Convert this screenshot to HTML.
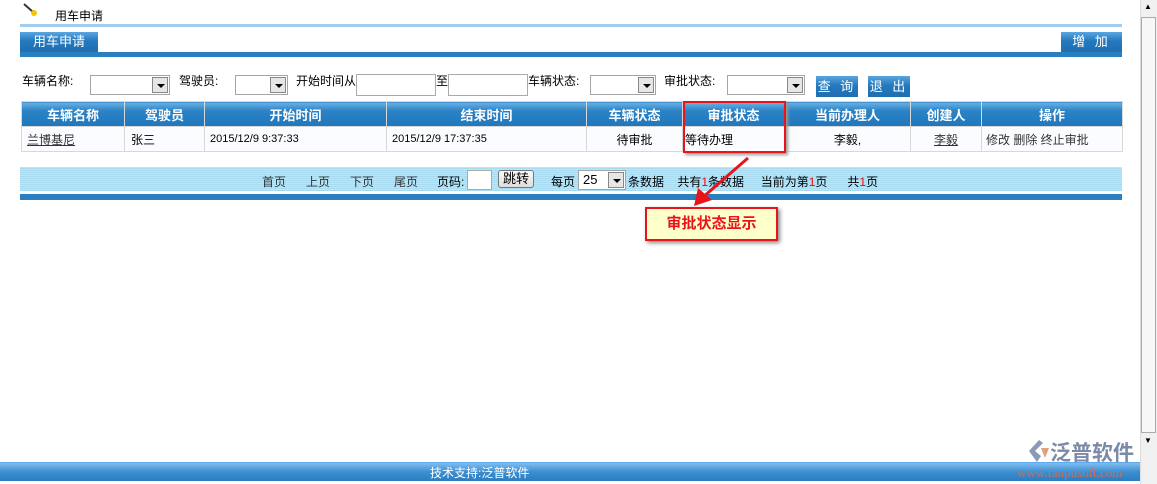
<!DOCTYPE html>
<html><head><meta charset="utf-8"><style>
*{margin:0;padding:0;box-sizing:border-box}
body{width:1157px;height:484px;overflow:hidden;background:#fff;font-family:"Liberation Sans","Noto Sans CJK SC",sans-serif;font-size:12px;color:#000;position:relative}
.a{position:absolute}
.btn{background:linear-gradient(#5aa6df,#2479bd 45%,#1f6fb1);color:#fff;text-align:center;font-size:13px;letter-spacing:3px}
.sel{position:absolute;height:20px;border:1px solid #a5a5a5;background:#fff}
.sel i{position:absolute;right:1px;top:1px;width:16px;height:16px;background:#e6e6e6;border:1px solid #888}
.sel i:after{content:"";position:absolute;left:4px;top:6px;border:4px solid transparent;border-top:4px solid #000}
.inp{position:absolute;height:22px;border:1px solid #aaa;background:#fff}
table{position:absolute;left:21px;top:101px;width:1102px;border-collapse:collapse}
td,th{border:1px solid #d8d8d8;height:25px}
th{background:linear-gradient(#6ab2e6,#2b82c4 35%,#1f77bd);color:#fff;font-size:13px;font-weight:bold}
td{background:#fafcff;font-size:12px}
</style></head><body>
<svg class="a" style="left:22px;top:2px" width="16" height="14"><line x1="2" y1="2" x2="11" y2="10" stroke="#333" stroke-width="2"/><circle cx="12" cy="11" r="3" fill="#f5c400"/></svg>
<div class="a" style="left:55px;top:7px;font-size:12px">用车申请</div>
<div class="a" style="left:20px;top:24px;width:1102px;height:3px;background:#a1cdf1"></div>
<div class="a btn" style="left:20px;top:32px;width:78px;height:20px;line-height:20px;letter-spacing:0">用车申请</div>
<div class="a btn" style="left:1061px;top:32px;width:61px;height:20px;line-height:20px">增 加</div>
<div class="a" style="left:20px;top:52px;width:1102px;height:5px;background:#2a7fc0"></div>

<div class="a" style="left:22px;top:72px">车辆名称:</div>
<div class="sel" style="left:90px;top:75px;width:80px"><i></i></div>
<div class="a" style="left:179px;top:72px">驾驶员:</div>
<div class="sel" style="left:235px;top:75px;width:53px"><i></i></div>
<div class="a" style="left:296px;top:72px">开始时间从</div>
<div class="inp" style="left:356px;top:74px;width:80px"></div>
<div class="a" style="left:436px;top:72px">至</div>
<div class="inp" style="left:448px;top:74px;width:80px"></div>
<div class="a" style="left:528px;top:72px">车辆状态:</div>
<div class="sel" style="left:590px;top:75px;width:66px"><i></i></div>
<div class="a" style="left:664px;top:72px">审批状态:</div>
<div class="sel" style="left:727px;top:75px;width:78px"><i></i></div>
<div class="a btn" style="left:816px;top:76px;width:42px;height:21px;line-height:21px">查 询</div>
<div class="a btn" style="left:868px;top:76px;width:42px;height:21px;line-height:21px">退 出</div>

<table><tr><th style="width:103px">车辆名称</th><th style="width:80px">驾驶员</th><th style="width:182px">开始时间</th><th style="width:200px">结束时间</th><th style="width:96px">车辆状态</th><th style="width:102px">审批状态</th><th style="width:126px">当前办理人</th><th style="width:71px">创建人</th><th>操作</th></tr>
<tr><td style="padding-left:5px"><u style="color:#333">兰博基尼</u></td><td style="padding-left:6px">张三</td><td style="padding-left:5px;font-size:11px">2015/12/9 9:37:33</td><td style="padding-left:5px;font-size:11px">2015/12/9 17:37:35</td><td style="text-align:center">待审批</td><td style="padding-left:2px">等待办理</td><td style="text-align:center">李毅,</td><td style="text-align:center"><u style="color:#333">李毅</u></td><td style="padding-left:4px;color:#333">修改 删除 终止审批</td></tr></table>
<div class="a" style="left:683px;top:101px;width:103px;height:52px;border:2px solid #e8141a;box-shadow:2px 2px 3px #999"></div>

<div class="a" style="left:20px;top:167px;width:1102px;height:24px;background:repeating-linear-gradient(#bfe5f3 0 1px,#a8daf0 1px 2px)"></div>
<div class="a" style="left:262px;top:173px;color:#333">首页&nbsp;&nbsp;&nbsp;&nbsp;&nbsp; 上页&nbsp;&nbsp;&nbsp;&nbsp;&nbsp; 下页&nbsp;&nbsp;&nbsp;&nbsp;&nbsp; 尾页</div>
<div class="a" style="left:437px;top:173px">页码:</div>
<div class="inp" style="left:467px;top:170px;width:25px;height:20px"></div>
<div class="a" style="left:498px;top:170px;width:36px;height:18px;border:1px solid #777;border-radius:3px;background:linear-gradient(#fafafa,#ddd);text-align:center;line-height:16px;font-size:13px">跳转</div>
<div class="a" style="left:551px;top:173px">每页</div>
<div class="sel" style="left:578px;top:170px;width:48px;height:20px;font-size:13px;padding-left:4px;line-height:18px">25<i></i></div>
<div class="a" style="left:628px;top:173px">条数据&nbsp;&nbsp;&nbsp; 共有<span style="color:red">1</span>条数据&nbsp;&nbsp;&nbsp;&nbsp; 当前为第<span style="color:red">1</span>页&nbsp;&nbsp;&nbsp;&nbsp;&nbsp; 共<span style="color:red">1</span>页</div>
<div class="a" style="left:20px;top:194px;width:1102px;height:6px;background:#2a7fc0"></div>

<svg class="a" style="left:680px;top:152px" width="80" height="60"><line x1="68" y1="6" x2="22" y2="46" stroke="#e8141a" stroke-width="3"/><polygon points="14,54 18,36 32,48" fill="#e8141a"/></svg>
<div class="a" style="left:645px;top:207px;width:133px;height:34px;border:2px solid #e8141a;background:#ffffcc;box-shadow:2px 2px 4px #888;color:#e8141a;font-weight:bold;font-size:15px;text-align:center;line-height:30px">审批状态显示</div>

<div class="a" style="left:1140px;top:0;width:17px;height:484px;background:#f0f0f0;border-left:1px solid #ddd"></div>
<div class="a" style="left:1141px;top:17px;width:15px;height:416px;background:#f7f7f7;border:1px solid #aaa"></div>
<div class="a" style="left:1144px;top:2px;font-size:8px">▲</div>
<div class="a" style="left:1144px;top:436px;font-size:8px">▼</div>

<div class="a" style="left:0;top:462px;width:1140px;height:19px;background:linear-gradient(#7fbdf0,#3b8ed0 50%,#2b7dc0);border-top:1px solid #5fa8ea"></div>
<div class="a" style="left:430px;top:464px;color:#fff;font-size:12px">技术支持:泛普软件</div>
<svg class="a" style="left:1025px;top:438px" width="26" height="26"><path d="M14 2 L4 13 L12 24 L16 18 L10 13 L18 5Z" fill="#8a9bb5"/><path d="M16 10 L24 10 L20 20 Z" fill="#e0a080"/></svg>
<div class="a" style="left:1050px;top:437px;font-size:21px;color:#7a8aa8;font-weight:bold">泛普软件</div>
<div class="a" style="left:1017px;top:465px;font-family:'Liberation Serif',serif;font-size:13px;color:#c87060">www.fanpusoft.com</div>
</body></html>
